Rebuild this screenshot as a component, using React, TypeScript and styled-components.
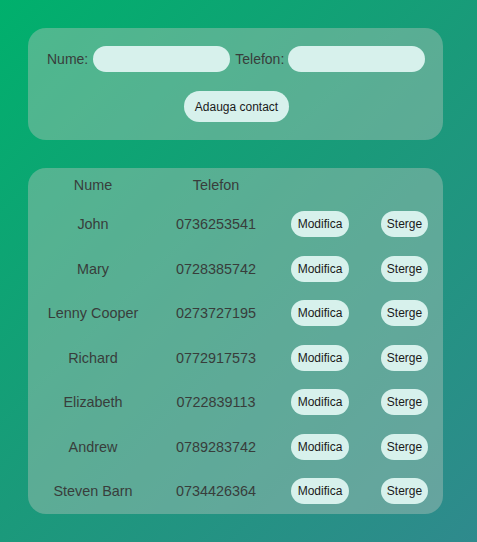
import React from "react";
import styled, { createGlobalStyle } from "styled-components";

const Global = createGlobalStyle`
  html, body { margin: 0; padding: 0; }
  body {
    font-family: "Liberation Sans", Arial, sans-serif;
    background: linear-gradient(135deg, #00b06c 0%, #1a9a7a 50%, #2f8a8d 100%);
    min-height: 542px;
  }
`;

const Page = styled.div`
  width: 477px;
  min-height: 542px;
  box-sizing: border-box;
  padding: 28px 34px 28px 28px;
  display: flex;
  flex-direction: column;
  gap: 28px;
`;

const Card = styled.div`
  width: 415px;
  box-sizing: border-box;
  border-radius: 18px;
  background: rgba(190, 200, 190, 0.4);
  color: #383d3b;
`;

const FormCard = styled(Card)`
  padding: 18px 17px 18px 19px;
  display: flex;
  flex-direction: column;
  align-items: center;
  gap: 19px;
`;

const FieldRow = styled.div`
  display: flex;
  align-items: center;
  width: 100%;
  font-size: 14px;
`;

const Label = styled.label<{ $before: number; $after: number }>`
  margin-left: ${(p) => p.$before}px;
  margin-right: ${(p) => p.$after}px;
  white-space: nowrap;
`;

const Input = styled.input`
  width: 137px;
  height: 26px;
  box-sizing: border-box;
  border: none;
  border-radius: 13px;
  background: #d7f1ec;
  outline: none;
  padding: 0 10px;
  font-family: inherit;
`;

const Pill = styled.button<{ $h: number; $px: number }>`
  height: ${(p) => p.$h}px;
  padding: 0 ${(p) => p.$px}px;
  border: none;
  border-radius: ${(p) => p.$h / 2}px;
  background: #d7f1ec;
  color: #1a1a1a;
  font-family: "Liberation Sans", Arial, sans-serif;
  font-size: 12px;
  cursor: pointer;
  white-space: nowrap;
`;

const TableCard = styled(Card)`
  padding: 0 18px 0 10px;
  display: grid;
  grid-template-columns: 110px 136px 72px 97px;
  grid-template-rows: 34px;
  grid-auto-rows: 44.5px;
  font-size: 14.4px;
`;

const Cell = styled.div`
  display: flex;
  align-items: center;
  justify-content: center;
  color: #383d3b;
  white-space: nowrap;
`;

const contacts = [
  ["John", "0736253541"],
  ["Mary", "0728385742"],
  ["Lenny Cooper", "0273727195"],
  ["Richard", "0772917573"],
  ["Elizabeth", "0722839113"],
  ["Andrew", "0789283742"],
  ["Steven Barn", "0734426364"],
];

export default function App() {
  return (
    <>
      <Global />
      <Page>
        <FormCard>
          <FieldRow>
            <Label $before={0} $after={5}>Nume:</Label>
            <Input />
            <Label $before={5} $after={4}>Telefon:</Label>
            <Input />
          </FieldRow>
          <Pill $h={31} $px={10.5}>Adauga contact</Pill>
        </FormCard>
        <TableCard>
          <Cell>Nume</Cell>
          <Cell>Telefon</Cell>
          <Cell />
          <Cell />
          {contacts.map(([n, t]) => (
            <React.Fragment key={n}>
              <Cell>{n}</Cell>
              <Cell>{t}</Cell>
              <Cell>
                <Pill $h={26} $px={7}>Modifica</Pill>
              </Cell>
              <Cell>
                <Pill $h={26} $px={6}>Sterge</Pill>
              </Cell>
            </React.Fragment>
          ))}
        </TableCard>
      </Page>
    </>
  );
}
